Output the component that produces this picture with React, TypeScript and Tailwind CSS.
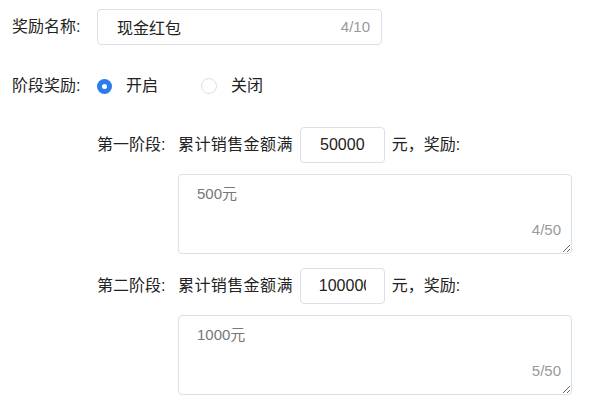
import { useState } from "react";

type Stage = {
  label: string;
  amount: string;
  reward: string;
};

const stages: Stage[] = [
  { label: "第一阶段:", amount: "50000", reward: "500元" },
  { label: "第二阶段:", amount: "100000", reward: "1000元" },
];

function Radio({ checked, label }: { checked: boolean; label: string }) {
  return (
    <label className="flex items-center cursor-pointer">
      {checked ? (
        <span className="w-[15px] h-[15px] rounded-full bg-[#2b7de9] flex items-center justify-center">
          <span className="w-[5px] h-[5px] rounded-full bg-white" />
        </span>
      ) : (
        <span className="w-[16px] h-[16px] rounded-full border border-[#dcdfe6] bg-white" />
      )}
      <span className="ml-[14px]">{label}</span>
    </label>
  );
}

function StageBlock({ stage }: { stage: Stage }) {
  return (
    <div>
      <div className="flex items-center h-9">
        <span className="w-[81px]">{stage.label}</span>
        <span className="tracking-[0.4px]">累计销售金额满</span>
        <input
          readOnly
          value={stage.amount}
          className="ml-[7px] w-[85px] h-9 px-[18px] border border-[#dcdfe6] rounded-[4px] text-center text-[16px] text-[#222] outline-none"
        />
        <span className="ml-[7px]">元，奖励:</span>
      </div>
      <div className="relative ml-[81px] mt-[11px] w-[394px] h-[80px]">
        <textarea
          readOnly
          value={stage.reward}
          className="w-full h-full px-[18px] py-[9px] border border-[#dcdfe6] rounded-[4px] text-[15px] leading-5 text-[#777] outline-none resize-y"
        />
        <span className="absolute right-[11px] bottom-[14px] text-[15px] leading-5 text-[#999]">
          {stage.reward.length}/50
        </span>
      </div>
    </div>
  );
}

export default function App() {
  const [open] = useState(true);

  return (
    <main
      className="min-h-screen bg-white pl-3 pt-[9px] text-[16px] text-[#222]"
      style={{ fontFamily: '"Liberation Sans", "Noto Sans CJK SC", sans-serif' }}
    >
      <div className="flex items-center h-9">
        <span className="w-[85px]">奖励名称:</span>
        <div className="relative w-[285px] h-9">
          <input
            readOnly
            value="现金红包"
            className="w-full h-full pl-[19px] pr-[50px] border border-[#dcdfe6] rounded-[4px] text-[16px] text-[#222] outline-none"
          />
          <span className="absolute right-[12px] top-0 h-full flex items-center text-[15px] text-[#999]">
            4/10
          </span>
        </div>
      </div>

      <div className="flex items-center h-9 mt-[23px]">
        <span className="w-[85px]">阶段奖励:</span>
        <div className="flex items-center gap-[43px]">
          <Radio checked={open} label="开启" />
          <Radio checked={!open} label="关闭" />
        </div>
      </div>

      <div className="pl-[85px] mt-[23px] flex flex-col gap-[14px]">
        {stages.map((stage) => (
          <StageBlock key={stage.label} stage={stage} />
        ))}
      </div>
    </main>
  );
}
